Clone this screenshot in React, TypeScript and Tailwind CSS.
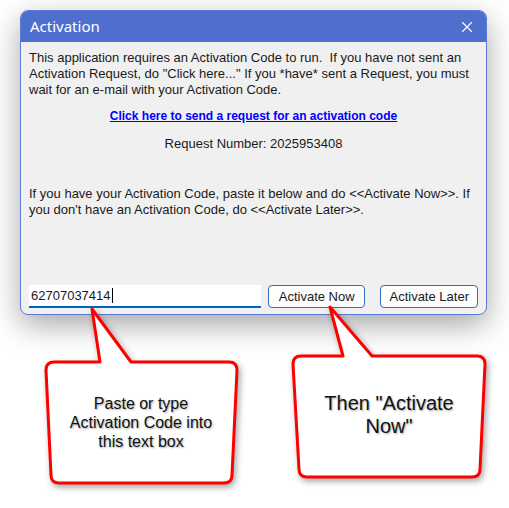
import { X } from "lucide-react";

const body = "font-['Liberation_Sans',Arial,sans-serif] text-[13px] text-[#1a1a1a]";

export default function App() {
  return (
    <div className="relative w-[509px] h-[508px] bg-white overflow-hidden">
      {/* dialog */}
      <div className="absolute left-[20px] top-[10px] w-[467px] h-[305px] rounded-lg overflow-hidden border border-[#5a7bd8] bg-[#f0f0f0] shadow-[0_10px_30px_rgba(0,0,0,0.35)] flex flex-col">
        <div className="h-[31px] bg-[#4f6fcf] flex items-center justify-between pl-[9px] pr-[10px] shrink-0">
          <span className="text-white text-[15px] font-['Noto_Sans',sans-serif]">Activation</span>
          <X size={18} strokeWidth={1.5} className="text-white" />
        </div>
        <div className={`flex-1 flex flex-col px-[8px] pt-[8px] leading-[16px] ${body}`}>
          <p>
            This application requires an Activation Code to run.&nbsp; If you have not sent an Activation Request, do "Click here..." If you *have* sent a Request, you must wait for an e-mail with your Activation Code.
          </p>
          <p className="mt-[10px] text-center font-bold text-[12px] text-[#0000ff] underline">
            Click here to send a request for an activation code
          </p>
          <p className="mt-[12px] text-center">Request Number: 2025953408</p>
          <p className="mt-[34px]">
            If you have your Activation Code, paste it below and do &lt;&lt;Activate Now&gt;&gt;. If you don't have an Activation Code, do &lt;&lt;Activate Later&gt;&gt;.
          </p>
          <div className="mt-auto mb-[6px] flex items-center">
            <div className="w-[233px] h-[23px] bg-white border-b-2 border-[#0067c0] flex items-center px-[2px]">
              <span>62707037414</span>
              <span className="w-px h-[15px] bg-black ml-[1px]" />
            </div>
            <button className="ml-[7px] w-[98px] h-[23px] rounded-[4px] border border-[#2f6fc4] bg-[#fdfdfd]">Activate Now</button>
            <button className="ml-[15px] w-[98px] h-[23px] rounded-[4px] border border-[#2f6fc4] bg-[#fdfdfd]">Activate Later</button>
          </div>
        </div>
      </div>

      {/* callouts */}
      <svg className="absolute left-0 top-0 drop-shadow-[2px_3px_3px_rgba(0,0,0,0.35)]" width="509" height="508">
        <path
          d="M 100 362 L 92 309 L 131 362 L 229 362 Q 237 362 237 370 L 232 475 Q 232 483 224 483 L 59 483 Q 51 483 51 475 L 46 370 Q 46 362 54 362 Z"
          fill="white" stroke="#ff0000" strokeWidth="3" strokeLinejoin="round"
        />
        <path
          d="M 343 356 L 330 307 L 372 356 L 477 356 Q 485 356 485 364 L 480 469 Q 480 477 472 477 L 307 477 Q 299 477 299 469 L 293 364 Q 293 356 301 356 Z"
          fill="white" stroke="#ff0000" strokeWidth="3" strokeLinejoin="round"
        />
      </svg>
      <div className="absolute left-[48px] top-[394px] w-[186px] text-center text-[16px] leading-[19px] text-[#111] font-['Liberation_Sans',Arial,sans-serif] [text-shadow:1px_1px_2px_rgba(0,0,0,0.35)]">
        Paste or type<br />Activation Code into<br />this text box
      </div>
      <div className="absolute left-[295px] top-[392px] w-[188px] text-center text-[20px] leading-[23px] text-[#111] font-['Liberation_Sans',Arial,sans-serif] [text-shadow:1px_1px_2px_rgba(0,0,0,0.35)]">
        Then "Activate<br />Now"
      </div>
    </div>
  );
}
